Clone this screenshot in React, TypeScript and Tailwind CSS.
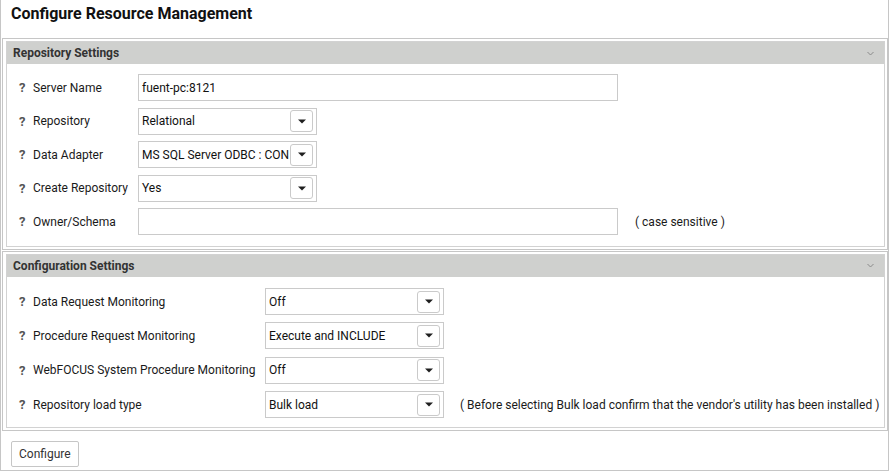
import React from "react";

const font = { fontFamily: "Roboto, 'Liberation Sans', sans-serif" };

function Arrow() {
  return (
    <svg width="8" height="5" viewBox="0 0 8 5">
      <path d="M0 0.5h8L4 4.5z" fill="#1f1f1f" />
    </svg>
  );
}

function Select({ value }: { value: string }) {
  return (
    <div className="flex h-[27px] w-[179px] items-center border border-[#cacaca] bg-white">
      <span className="flex-1 overflow-hidden whitespace-nowrap pl-[3px] text-[12px] text-[#111]">
        {value}
      </span>
      <div className="mr-[3px] flex h-[22px] w-[23px] shrink-0 items-center justify-center rounded-[3px] border border-[#cacaca] bg-white">
        <Arrow />
      </div>
    </div>
  );
}

function Input({ value }: { value?: string }) {
  return (
    <div className="flex h-[27px] w-[480px] items-center border border-[#cacaca] bg-white pl-[3px] text-[12px] text-[#111]">
      {value}
    </div>
  );
}

function Row({
  label,
  labelW,
  h,
  children,
  note,
  noteGap,
}: {
  label: string;
  labelW: string;
  h: string;
  children: React.ReactNode;
  note?: string;
  noteGap?: string;
}) {
  return (
    <div className={`flex items-center ${h}`}>
      <span className="ml-[12px] w-[14px] text-[13px] font-bold text-[#555]">?</span>
      <span className={`${labelW} whitespace-nowrap text-[12px] text-[#1a1a1a]`}>{label}</span>
      {children}
      {note && <span className={`${noteGap} whitespace-nowrap text-[12px] text-[#1a1a1a]`}>{note}</span>}
    </div>
  );
}

function Section({
  title,
  children,
  bodyCls,
  outerCls,
}: {
  title: string;
  children: React.ReactNode;
  bodyCls: string;
  outerCls?: string;
}) {
  return (
    <div className={`ml-[1px] border border-[#c6c6c6] pb-[2px] pl-[3px] pr-[2px] pt-[2px] ${outerCls ?? ""}`}>
      <div className="border border-[#d2d2d2] bg-white">
        <div className="flex h-[22px] items-center justify-between bg-[#cfd0ce] pl-[6px] pr-[10px]">
          <span className="text-[12px] font-bold text-[#333]">{title}</span>
          <svg width="7" height="5" viewBox="0 0 7 5">
            <path d="M0.5 1l3 3 3-3" fill="none" stroke="#8a8a8a" strokeWidth="1" />
          </svg>
        </div>
        <div className={bodyCls}>{children}</div>
      </div>
    </div>
  );
}

export default function App() {
  return (
    <div style={font} className="h-[471px] w-[889px] border-b border-l border-r border-[#c6c6c6] bg-white">
      <div className="flex h-[38px] items-start pl-[10px] pt-[4px]">
        <span className="text-[16px] font-bold leading-[20px] text-[#111]">Configure Resource Management</span>
      </div>
      <Section title="Repository Settings" bodyCls="pt-[7px] pb-[7px]">
        <Row label="Server Name" labelW="w-[105px]" h="h-[33.5px]">
          <Input value="fuent-pc:8121" />
        </Row>
        <Row label="Repository" labelW="w-[105px]" h="h-[33.5px]">
          <Select value="Relational" />
        </Row>
        <Row label="Data Adapter" labelW="w-[105px]" h="h-[33.5px]">
          <Select value="MS SQL Server ODBC : CON" />
        </Row>
        <Row label="Create Repository" labelW="w-[105px]" h="h-[33.5px]">
          <Select value="Yes" />
        </Row>
        <Row label="Owner/Schema" labelW="w-[105px]" h="h-[33.5px]" note="( case sensitive )" noteGap="ml-[17px]">
          <Input />
        </Row>
      </Section>
      <Section title="Configuration Settings" bodyCls="pt-[8px] pb-[5px]" outerCls="mt-[1px]">
        <Row label="Data Request Monitoring" labelW="w-[232px]" h="h-[34.33px]">
          <Select value="Off" />
        </Row>
        <Row label="Procedure Request Monitoring" labelW="w-[232px]" h="h-[34.33px]">
          <Select value="Execute and INCLUDE" />
        </Row>
        <Row label="WebFOCUS System Procedure Monitoring" labelW="w-[232px]" h="h-[34.33px]">
          <Select value="Off" />
        </Row>
        <Row
          label="Repository load type"
          labelW="w-[232px]"
          h="h-[34.33px]"
          note="( Before selecting Bulk load confirm that the vendor's utility has been installed )"
          noteGap="ml-[16px]"
        >
          <Select value="Bulk load" />
        </Row>
      </Section>
      <div className="pl-[10px] pt-[10px]">
        <button className="h-[26px] rounded-[2px] border border-[#c6c6c6] bg-white px-[7px] text-[12px] text-[#333]">
          Configure
        </button>
      </div>
    </div>
  );
}
